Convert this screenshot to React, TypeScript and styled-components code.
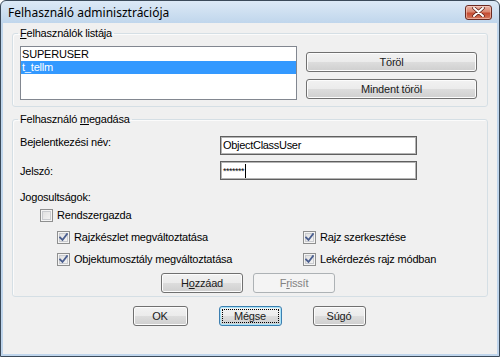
import React from "react"
import styled, { createGlobalStyle, css } from "styled-components"

const GlobalStyle = createGlobalStyle`
	html, body {
		margin: 0;
		padding: 0;
		background: #ffffff;
	}

	body {
		font-family: "Liberation Sans", Arial, sans-serif;
		font-size: 11px;
		letter-spacing: -.2px;
		color: #000;
	}
`

const CheckMark = () => (
	<svg width="9" height="9" viewBox="0 0 9 9">
		<path d="M1 4.5 L3.5 7 L8 1" fill="none" stroke="#4a5e8f" strokeWidth="1.8" strokeLinecap="square" />
	</svg>
)

const CloseGlyph = () => (
	<svg width="13" height="10" viewBox="0 0 13 10">
		<path d="M2 1 L11 9 M11 1 L2 9" stroke="#5a1d14" strokeWidth="3.4" strokeLinecap="round" />
		<path d="M2 1 L11 9 M11 1 L2 9" stroke="#ffffff" strokeWidth="2" strokeLinecap="round" />
	</svg>
)

const Box = ({ checked, label }: { checked?: boolean, label: string }) => (
	<CheckRow>
		<CheckSquare>{checked && <CheckMark />}</CheckSquare>
		<span>{label}</span>
	</CheckRow>
)

const App = () => {

	return (

		<>
			<GlobalStyle />

			<Window>

				<TitleBar>
					<span>Felhasználó adminisztrációja</span>
					<CloseButton><CloseGlyph /></CloseButton>
				</TitleBar>

				<Body>

					<Group>
						<Legend><u>F</u>elhasználók listája</Legend>

						<ListRow>
							<ListBox>
								<ListItem>SUPERUSER</ListItem>
								<ListItem $selected>t_tellm</ListItem>
							</ListBox>

							<SideButtons>
								<Button>Töröl</Button>
								<Button>Mindent töröl</Button>
							</SideButtons>
						</ListRow>
					</Group>

					<Group $second>
						<Legend>Felhasználó <u>m</u>egadása</Legend>

						<FieldRow>
							<FieldLabel $shift={0}>Bejelentkezési név:</FieldLabel>
							<TextBox>ObjectClassUser</TextBox>
						</FieldRow>

						<FieldRow $gap={6}>
							<FieldLabel $shift={4}>Jelszó:</FieldLabel>
							<TextBox><Stars>*******</Stars><Caret /></TextBox>
						</FieldRow>

						<SectionLabel>Jogosultságok:</SectionLabel>

						<AdminRow>
							<Box label="Rendszergazda" />
						</AdminRow>

						<RightsGrid>
							<Box checked label="Rajzkészlet megváltoztatása" />
							<Box checked label="Rajz szerkesztése" />
							<Box checked label="Objektumosztály megváltoztatása" />
							<Box checked label="Lekérdezés rajz módban" />
						</RightsGrid>

						<ButtonBar $gap={10} $top={7}>
							<Button $width={82}>H<u>o</u>zzáad</Button>
							<Button $width={82} disabled>F<u>r</u>issít</Button>
						</ButtonBar>
					</Group>

					<DialogButtons>
						<Button $width={55}>OK</Button>
						<Button $width={63} $focused>Mégse</Button>
						<Button $width={53}>Súgó</Button>
					</DialogButtons>

				</Body>

			</Window>
		</>

	)

}

const Window = styled.div`
	width: 500px;
	height: 357px;
	box-sizing: border-box;
	border: 1px solid #3b4a5a;
	border-radius: 6px 6px 0 0;
	background: linear-gradient(#dce9f6, #c0d6ec 22px, #bfd5ec);
	padding: 0 2px 2px;
	display: flex;
	flex-direction: column;
	overflow: hidden;
`

const TitleBar = styled.div`
	height: 22px;
	flex: none;
	display: flex;
	align-items: center;
	justify-content: space-between;
	padding: 1px 5px 0 5px;
	box-sizing: border-box;
	font-family: "Noto Sans", "Open Sans", sans-serif;
	font-size: 12px;
	letter-spacing: 0;
	color: #000;
`

const CloseButton = styled.div`
	width: 27px;
	height: 15px;
	margin-top: -1px;
	box-sizing: border-box;
	border: 1px solid #6b2a22;
	border-radius: 3px;
	background: linear-gradient(#eab2a4, #d98670 45%, #c54b32 55%, #d57a60);
	box-shadow: inset 0 0 0 1px rgba(255, 220, 210, .5);
	display: flex;
	align-items: center;
	justify-content: center;
`

const Body = styled.div`
	flex: 1;
	background: #f0f0f0;
	padding: 4px 9px 0;
	display: flex;
	flex-direction: column;
`

const Group = styled.fieldset<{ $second?: boolean }>`
	margin: ${p => p.$second ? "6px 0 0" : "0"};
	min-width: 0;
	border: 1px solid #d5dfe5;
	border-radius: 3px;
	padding: ${p => p.$second ? "10px 9px 3px 7px" : "6px 9px 6px 7px"};
	box-shadow: inset 1px 1px 0 #fbfbfb;
`

const Legend = styled.legend`
	padding: 0 2px;
	margin-left: -2px;
	line-height: 13px;
	font-size: 11px;

	u {
		text-decoration-thickness: 1px;
		text-underline-offset: 1px;
	}
`

const ListRow = styled.div`
	display: flex;
	gap: 9px;
`

const ListBox = styled.div`
	width: 277px;
	height: 54px;
	box-sizing: border-box;
	border: 1px solid #828790;
	padding: 1px 0;
	background: #fff;
`

const ListItem = styled.div<{ $selected?: boolean }>`
	height: 13px;
	line-height: 13px;
	padding-left: 1px;
	background: ${p => p.$selected ? "#3399ff" : "transparent"};
	color: ${p => p.$selected ? "#fff" : "#000"};
`

const SideButtons = styled.div`
	width: 171px;
	padding-top: 6px;
	display: flex;
	flex-direction: column;
	gap: 7px;
`

const Button = styled.button<{ $width?: number, $focused?: boolean }>`
	position: relative;
	width: ${p => p.$width ? `${p.$width}px` : "100%"};
	height: 20px;
	padding: 0;
	box-sizing: border-box;
	font-family: "Liberation Sans", Arial, sans-serif;
	font-size: 11px;
	font-weight: 400;
	letter-spacing: -.2px;
	color: #1a1a1a;
	border: 1px solid #707070;
	border-radius: 3px;
	background: linear-gradient(#f2f2f2, #ebebeb 50%, #dddddd 50%, #cfcfcf);
	box-shadow: inset 0 0 0 1px #fcfcfc;

	u {
		text-underline-offset: 1px;
	}

	${p => p.$focused && css`
		border-color: #3c7fb1;
		box-shadow: inset 0 0 0 1px #a8e3f8;

		&::after {
			content: "";
			position: absolute;
			inset: 2px;
			border: 1px dotted #000;
			border-radius: 1px;
		}
	`}

	&:disabled {
		color: #838383;
		border-color: #adb2b5;
		background: #f4f4f4;
		box-shadow: none;
	}
`

const FieldRow = styled.div<{ $gap?: number }>`
	display: grid;
	grid-template-columns: 200px 197px;
	align-items: start;
	margin-top: ${p => p.$gap || 0}px;
`

const FieldLabel = styled.div<{ $shift: number }>`
	line-height: 13px;
	margin-top: ${p => p.$shift}px;
`

const TextBox = styled.div`
	height: 19px;
	box-sizing: border-box;
	border: 1px solid #5f5f5f;
	box-shadow: inset 0 0 0 1px #b4b4b4;
	background: #fff;
	padding: 0 2px;
	display: flex;
	align-items: center;
	line-height: 13px;
	letter-spacing: -.3px;
`

const Stars = styled.span`
	font-size: 9px;
	letter-spacing: -.5px;
	margin-top: 2px;
`

const Caret = styled.span`
	width: 1px;
	height: 14px;
	margin-left: 1px;
	background: #000;
`

const SectionLabel = styled.div`
	line-height: 13px;
	margin-top: 11px;
`

const AdminRow = styled.div`
	margin: 5px 0 0 20px;
`

const CheckRow = styled.div`
	display: flex;
	align-items: center;
	gap: 4px;
	height: 13px;
	line-height: 13px;
	white-space: nowrap;
`

const CheckSquare = styled.span`
	width: 13px;
	height: 13px;
	flex: none;
	box-sizing: border-box;
	border: 1px solid #8e8f8f;
	background: linear-gradient(135deg, #dcdcdc, #f7f7f7);
	box-shadow: inset 0 0 0 1px #f4f4f4, inset 0 0 0 2px #c9cbcf;
	display: flex;
	align-items: center;
	justify-content: center;
`

const RightsGrid = styled.div`
	display: grid;
	grid-template-columns: 246px auto;
	row-gap: 9px;
	margin: 9px 0 0 37px;
`

const ButtonBar = styled.div<{ $gap: number, $top: number }>`
	display: flex;
	justify-content: center;
	gap: ${p => p.$gap}px;
	margin-top: ${p => p.$top}px;
	padding-right: 2px;
`

const DialogButtons = styled.div`
	display: flex;
	justify-content: center;
	gap: 31px;
	margin-top: 9px;
	padding-right: 2px;
`

export default App
